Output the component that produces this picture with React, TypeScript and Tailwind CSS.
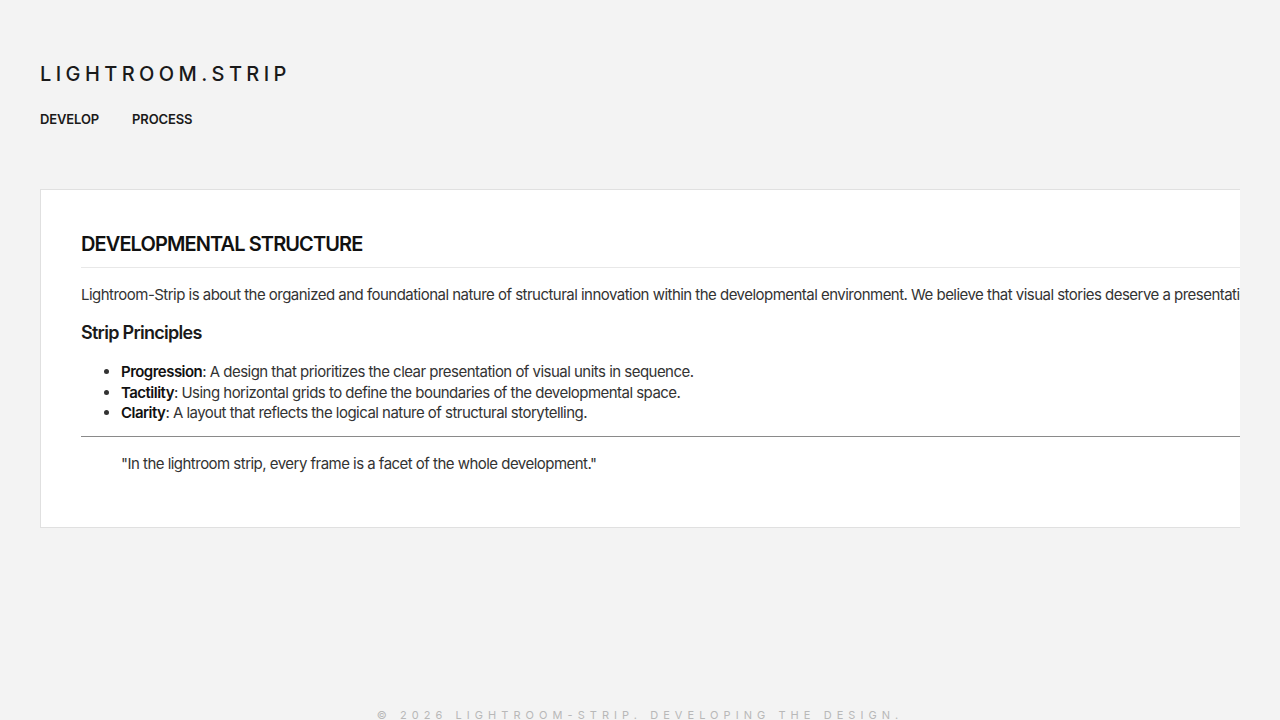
const principles = [
  { term: 'Progression', text: 'A design that prioritizes the clear presentation of visual units in sequence.' },
  { term: 'Tactility', text: 'Using horizontal grids to define the boundaries of the developmental space.' },
  { term: 'Clarity', text: 'A layout that reflects the logical nature of structural storytelling.' },
];

export default function App() {
  return (
    <div className="flex h-[720px] flex-col overflow-hidden bg-[#f3f3f3] font-['Inter',sans-serif] text-[#1a1a1a]">
      <header className="px-10 pt-[61px]">
        <h1 className="text-[20px] font-medium leading-[26px] tracking-[0.22em] text-[#1a1a1a]">LIGHTROOM.STRIP</h1>
        <nav className="mt-[22px] flex gap-[33px] text-[13px] font-semibold leading-5 tracking-[-0.01em]">
          <a className="text-[#1a1a1a]">DEVELOP</a>
          <a className="text-[#1a1a1a]">PROCESS</a>
        </nav>
      </header>

      <main className="mx-10 mt-[60px] overflow-hidden">
        <section className="w-[1400px] border border-[#e0e0e0] bg-white px-10 pt-10 pb-[51px]">
          <h2 className="border-b border-[#e8e8e8] pb-[9px] text-[20px] font-semibold leading-7 tracking-[-0.045em] text-[#111]">
            DEVELOPMENTAL STRUCTURE
          </h2>
          <p className="mt-[15px] whitespace-nowrap text-[15px] leading-6 tracking-[-0.035em] text-[#333]">
            Lightroom-Strip is about the organized and foundational nature of structural innovation within the developmental environment. We believe that visual stories deserve a presentation that is as structured as the development itself.
          </p>
          <h3 className="mt-[14px] text-[18px] font-semibold leading-6 tracking-[-0.04em] text-[#1a1a1a]">Strip Principles</h3>
          <ul className="mt-[17px] list-disc pl-10 text-[15px] leading-[20.5px] tracking-[-0.035em] text-[#333]">
            {principles.map((p) => (
              <li key={p.term}>
                <strong className="font-semibold text-[#111]">{p.term}</strong>: {p.text}
              </li>
            ))}
          </ul>
          <hr className="mt-[12px] border-t border-[#8a8a8a]" />
          <blockquote className="mt-[15px] pl-10 text-[15px] leading-6 tracking-[-0.035em] text-[#333]">
            "In the lightroom strip, every frame is a facet of the whole development."
          </blockquote>
        </section>
      </main>

      <footer className="mt-auto translate-y-[1px] text-center text-[11px] leading-[11px] tracking-[0.46em] text-[#b8b8b8]">
        © 2026 LIGHTROOM-STRIP. DEVELOPING THE DESIGN.
      </footer>
    </div>
  );
}
